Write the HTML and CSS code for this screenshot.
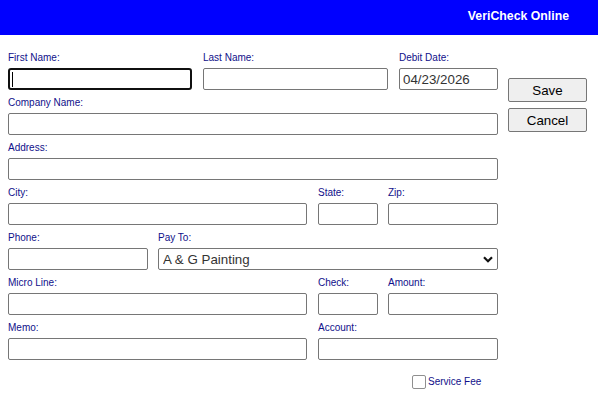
FILE: index.html
```html
<!DOCTYPE html>
<html>
<head>
<meta charset="utf-8">
<title>VeriCheck Online</title>
<link rel="stylesheet" href="styles.css">
</head>
<body>
<header class="topbar"><span class="brand">VeriCheck Online</span></header>
<main class="page">
  <form class="form">
    <div class="row">
      <label class="field w-first"><span class="lbl">First Name:</span><span class="caret-wrap"><input type="text" class="inp focused"><span class="caret"></span></span></label>
      <label class="field w-last"><span class="lbl">Last Name:</span><input type="text" class="inp"></label>
      <label class="field w-date"><span class="lbl">Debit Date:</span><input type="text" class="inp" value="04/23/2026"></label>
    </div>
    <div class="row">
      <label class="field w-full"><span class="lbl">Company Name:</span><input type="text" class="inp"></label>
    </div>
    <div class="row">
      <label class="field w-full"><span class="lbl">Address:</span><input type="text" class="inp"></label>
    </div>
    <div class="row">
      <label class="field w-city"><span class="lbl">City:</span><input type="text" class="inp"></label>
      <label class="field w-state"><span class="lbl">State:</span><input type="text" class="inp"></label>
      <label class="field w-zip"><span class="lbl">Zip:</span><input type="text" class="inp"></label>
    </div>
    <div class="row">
      <label class="field w-phone"><span class="lbl">Phone:</span><input type="text" class="inp"></label>
      <label class="field w-pay"><span class="lbl">Pay To:</span>
        <span class="select-wrap"><select class="sel"><option>A &amp; G Painting</option></select>
        <svg class="chev" width="10" height="7" viewBox="0 0 10 7"><path d="M1 1.2 L5 5.2 L9 1.2" fill="none" stroke="#111" stroke-width="2.2"/></svg></span>
      </label>
    </div>
    <div class="row">
      <label class="field w-city"><span class="lbl">Micro Line:</span><input type="text" class="inp"></label>
      <label class="field w-state"><span class="lbl">Check:</span><input type="text" class="inp"></label>
      <label class="field w-zip"><span class="lbl">Amount:</span><input type="text" class="inp"></label>
    </div>
    <div class="row">
      <label class="field w-city"><span class="lbl">Memo:</span><input type="text" class="inp"></label>
      <label class="field w-account"><span class="lbl">Account:</span><input type="text" class="inp"></label>
    </div>
    <div class="check-row">
      <label class="chk-label"><span class="chk"></span>Service Fee</label>
    </div>
  </form>
  <div class="actions">
    <button type="button" class="btn">Save</button>
    <button type="button" class="btn">Cancel</button>
  </div>
</main>
</body>
</html>
```

FILE: styles.css
```css
html, body {
  margin: 0;
  padding: 0;
  background: #ffffff;
  font-family: "Liberation Sans", Arial, sans-serif;
}

.topbar {
  height: 35px;
  background: #0000ff;
  display: flex;
  justify-content: flex-end;
  align-items: center;
  padding-right: 29px;
  box-sizing: border-box;
}

.brand {
  color: #ffffff;
  font-weight: bold;
  font-size: 12.3px;
  margin-top: -3px;
}

.page {
  display: flex;
  align-items: flex-start;
  gap: 10px;
  padding: 17px 0 0 8px;
}

.form {
  width: 490px;
  display: flex;
  flex-direction: column;
  gap: 7px;
  margin: 0;
}

.row {
  display: flex;
  gap: 11px;
}

.field {
  display: flex;
  flex-direction: column;
  gap: 4px;
}

.lbl {
  font-size: 10px;
  line-height: 12px;
  color: #10108a;
  height: 12px;
}

.w-first { width: 184px; }
.w-last { width: 185px; }
.w-date { width: 99px; }
.w-full { width: 490px; }
.w-city { width: 299px; }
.w-state { width: 60px; margin-right: -1px; }
.w-zip { width: 110px; }
.w-phone { width: 140px; margin-right: -1px; }
.w-pay { width: 340px; }
.w-account { width: 180px; }

.inp {
  box-sizing: border-box;
  width: 100%;
  height: 22px;
  margin: 0;
  border: 1px solid #767676;
  border-radius: 2px;
  padding: 1px 3px;
  font-family: "Liberation Sans", Arial, sans-serif;
  font-size: 13.33px;
  color: #333333;
  background: #ffffff;
  outline: none;
}

.inp.focused {
  border: 2px solid #101010;
  border-radius: 3px;
}

.caret-wrap {
  position: relative;
  display: block;
}

.caret {
  position: absolute;
  left: 4px;
  top: 4px;
  width: 1px;
  height: 15px;
  background: #000000;
}

.select-wrap {
  position: relative;
  display: block;
}

.sel {
  box-sizing: border-box;
  width: 100%;
  height: 22px;
  margin: 0;
  border: 1px solid #767676;
  border-radius: 2px;
  padding: 0 0 0 4px;
  font-family: "Liberation Sans", Arial, sans-serif;
  font-size: 13.33px;
  color: #333333;
  background: #ffffff;
  appearance: none;
  -webkit-appearance: none;
}

.chev {
  position: absolute;
  right: 5px;
  top: 8px;
  pointer-events: none;
}

.check-row {
  display: flex;
  padding-left: 404px;
  margin-top: 7px;
}

.chk-label {
  display: flex;
  align-items: center;
  font-size: 10px;
  color: #10108a;
  line-height: 15px;
}

.chk {
  box-sizing: border-box;
  width: 14px;
  height: 14px;
  border: 1px solid #8f8f8f;
  border-radius: 2px;
  background: #ffffff;
  margin-right: 2px;
}

.actions {
  display: flex;
  flex-direction: column;
  gap: 6px;
  margin-top: 26px;
}

.btn {
  box-sizing: border-box;
  width: 79px;
  height: 24px;
  margin: 0;
  padding: 0;
  border: 1px solid #767676;
  border-radius: 2px;
  background: #efefef;
  color: #000000;
  font-family: "Liberation Sans", Arial, sans-serif;
  font-size: 13.33px;
}
```
